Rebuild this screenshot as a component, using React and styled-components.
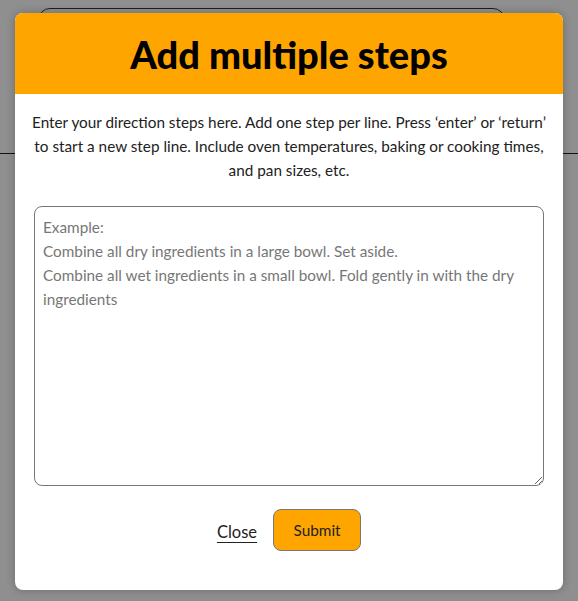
import styled, { createGlobalStyle } from "styled-components";

const GlobalStyle = createGlobalStyle`
  html, body {
    margin: 0;
    padding: 0;
    background: #fff;
    font-family: Lato, "Liberation Sans", sans-serif;
  }
`;

const Page = styled.div`
  position: relative;
  width: 578px;
  height: 601px;
  overflow: hidden;
  background: #fff;
`;

const PageTop = styled.div`
  height: 154px;
  border-bottom: 1px solid #222;
  padding: 8px 0 0 38px;
  box-sizing: border-box;
`;

const SearchBox = styled.div`
  width: 467px;
  height: 40px;
  border: 1px solid #333;
  border-radius: 12px;
  box-sizing: border-box;
`;

const Overlay = styled.div`
  position: absolute;
  inset: 0;
  background: rgba(0, 0, 0, 0.44);
  display: flex;
  justify-content: center;
  align-items: flex-start;
  padding-top: 13px;
`;

const Modal = styled.div`
  width: 548px;
  height: 577px;
  background: #fff;
  border-radius: 8px;
  overflow: hidden;
  box-shadow: 0 0 8px rgba(0, 0, 0, 0.25);
  display: flex;
  flex-direction: column;
`;

const Header = styled.div`
  height: 81px;
  background: #ffa500;
  display: flex;
  align-items: center;
  justify-content: center;
`;

const Title = styled.h1`
  margin: 0;
  font-size: 38px;
  font-weight: 900;
  color: #000;
`;

const Body = styled.div`
  padding: 16px 12px 0;
  display: flex;
  flex-direction: column;
  align-items: center;
`;

const Description = styled.p`
  margin: 0;
  font-size: 15.3px;
  line-height: 24px;
  color: #222;
  text-align: center;
`;

const StepsInput = styled.textarea`
  margin-top: 24px;
  width: 510px;
  height: 280px;
  box-sizing: border-box;
  border: 1px solid #777;
  border-radius: 8px;
  padding: 8px 8px;
  font-family: inherit;
  font-size: 15.3px;
  line-height: 24px;
  color: #222;
  resize: vertical;
  &::placeholder {
    color: #777;
  }
`;

const Actions = styled.div`
  margin-top: 23px;
  display: flex;
  align-items: center;
  gap: 16px;
`;

const CloseLink = styled.button`
  background: none;
  border: none;
  padding: 0;
  margin-top: 4px;
  font-family: inherit;
  font-size: 16.5px;
  color: #222;
  text-decoration: underline;
  text-underline-offset: 4px;
  cursor: pointer;
`;

const SubmitButton = styled.button`
  width: 88px;
  height: 42px;
  background: #ffa500;
  border: 1px solid #777;
  border-radius: 8px;
  font-family: inherit;
  font-size: 15.3px;
  color: #222;
  cursor: pointer;
`;

export default function App() {
  return (
    <>
      <GlobalStyle />
      <Page>
        <PageTop>
          <SearchBox />
        </PageTop>
        <Overlay>
          <Modal>
            <Header>
              <Title>Add multiple steps</Title>
            </Header>
            <Body>
              <Description>
                Enter your direction steps here. Add one step per line. Press
                ‘enter’ or ‘return’ to start a new step line. Include oven
                temperatures, baking or cooking times, and pan sizes, etc.
              </Description>
              <StepsInput
                placeholder={
                  "Example:\nCombine all dry ingredients in a large bowl. Set aside.\nCombine all wet ingredients in a small bowl. Fold gently in with the dry ingredients"
                }
              />
              <Actions>
                <CloseLink>Close</CloseLink>
                <SubmitButton>Submit</SubmitButton>
              </Actions>
            </Body>
          </Modal>
        </Overlay>
      </Page>
    </>
  );
}
